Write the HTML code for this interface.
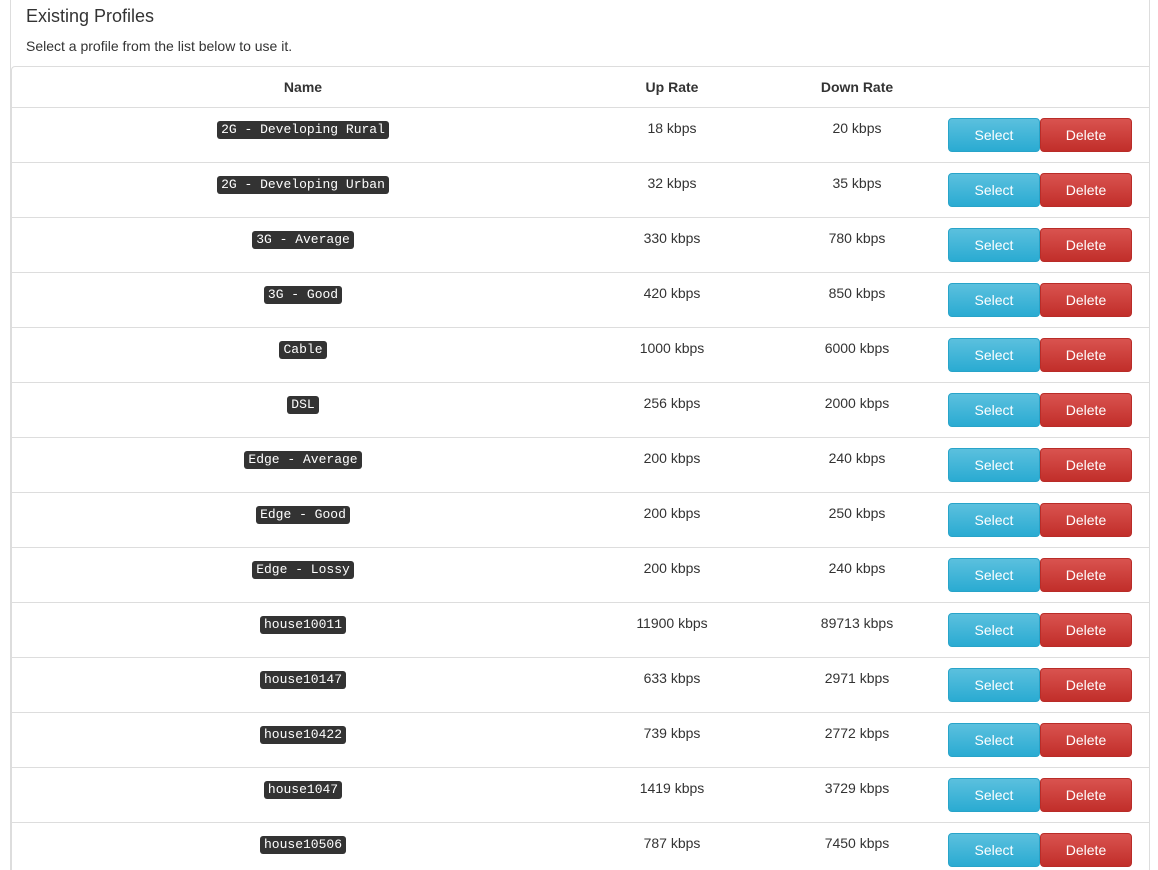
<!DOCTYPE html>
<html style="width:1158px;height:870px;overflow:hidden"><head><meta charset="utf-8"><style>
*{box-sizing:border-box;margin:0;padding:0}
body{width:1158px;height:870px;overflow:hidden;background:#fff;font-family:"Liberation Sans",sans-serif;color:#333;position:relative}
.panel{position:absolute;left:10px;top:-5px;width:1140px;height:900px;border:1px solid #ddd;border-top:none}
h3{position:absolute;left:26px;top:5px;font-size:18px;font-weight:normal;line-height:22px}
.sub{position:absolute;left:26px;top:37px;font-size:14px;line-height:18px}
.tbl{position:absolute;left:11px;top:66px;width:1138px;height:820px;border-top:1px solid #ddd;border-left:1px solid #ddd;border-radius:4px 0 0 0}
.hd{position:absolute;top:0;height:41px;width:100%;border-bottom:1px solid #ddd;font-weight:bold;font-size:14px}
.row{position:absolute;left:0;width:100%;height:55px;border-bottom:1px solid #ddd;font-size:14px}
.c{position:absolute;text-align:center;line-height:20px}
.n{left:0;width:582px}.u{left:584px;width:152px}.d{left:768px;width:154px}
.hd .c{top:10px}.row .c{top:10px}
code{font-family:"Liberation Mono",monospace;font-size:13px;background:#333;color:#fff;padding:1px 4px;border-radius:3px;line-height:16px;display:inline-block;margin-top:3px;vertical-align:top}
.b{position:absolute;top:10px;height:34px;width:92px;border-radius:4px;color:#fff;font-size:14px;text-align:center;line-height:32px}
.s{left:936px;background:linear-gradient(#5bc0de,#2aabd2);border:1px solid #28a4c9}
.x{left:1028px;background:linear-gradient(#d9534f,#c12e2a);border:1px solid #b92c28}
</style></head><body>
<div class="panel"></div>
<h3>Existing Profiles</h3>
<div class="sub">Select a profile from the list below to use it.</div>
<div class="tbl">
<div class="hd"><div class="c n">Name</div><div class="c u">Up Rate</div><div class="c d">Down Rate</div></div>
<div class="row" style="top:41px"><div class="c n"><code>2G - Developing Rural</code></div><div class="c u">18 kbps</div><div class="c d">20 kbps</div><div class="b s">Select</div><div class="b x">Delete</div></div>
<div class="row" style="top:96px"><div class="c n"><code>2G - Developing Urban</code></div><div class="c u">32 kbps</div><div class="c d">35 kbps</div><div class="b s">Select</div><div class="b x">Delete</div></div>
<div class="row" style="top:151px"><div class="c n"><code>3G - Average</code></div><div class="c u">330 kbps</div><div class="c d">780 kbps</div><div class="b s">Select</div><div class="b x">Delete</div></div>
<div class="row" style="top:206px"><div class="c n"><code>3G - Good</code></div><div class="c u">420 kbps</div><div class="c d">850 kbps</div><div class="b s">Select</div><div class="b x">Delete</div></div>
<div class="row" style="top:261px"><div class="c n"><code>Cable</code></div><div class="c u">1000 kbps</div><div class="c d">6000 kbps</div><div class="b s">Select</div><div class="b x">Delete</div></div>
<div class="row" style="top:316px"><div class="c n"><code>DSL</code></div><div class="c u">256 kbps</div><div class="c d">2000 kbps</div><div class="b s">Select</div><div class="b x">Delete</div></div>
<div class="row" style="top:371px"><div class="c n"><code>Edge - Average</code></div><div class="c u">200 kbps</div><div class="c d">240 kbps</div><div class="b s">Select</div><div class="b x">Delete</div></div>
<div class="row" style="top:426px"><div class="c n"><code>Edge - Good</code></div><div class="c u">200 kbps</div><div class="c d">250 kbps</div><div class="b s">Select</div><div class="b x">Delete</div></div>
<div class="row" style="top:481px"><div class="c n"><code>Edge - Lossy</code></div><div class="c u">200 kbps</div><div class="c d">240 kbps</div><div class="b s">Select</div><div class="b x">Delete</div></div>
<div class="row" style="top:536px"><div class="c n"><code>house10011</code></div><div class="c u">11900 kbps</div><div class="c d">89713 kbps</div><div class="b s">Select</div><div class="b x">Delete</div></div>
<div class="row" style="top:591px"><div class="c n"><code>house10147</code></div><div class="c u">633 kbps</div><div class="c d">2971 kbps</div><div class="b s">Select</div><div class="b x">Delete</div></div>
<div class="row" style="top:646px"><div class="c n"><code>house10422</code></div><div class="c u">739 kbps</div><div class="c d">2772 kbps</div><div class="b s">Select</div><div class="b x">Delete</div></div>
<div class="row" style="top:701px"><div class="c n"><code>house1047</code></div><div class="c u">1419 kbps</div><div class="c d">3729 kbps</div><div class="b s">Select</div><div class="b x">Delete</div></div>
<div class="row" style="top:756px"><div class="c n"><code>house10506</code></div><div class="c u">787 kbps</div><div class="c d">7450 kbps</div><div class="b s">Select</div><div class="b x">Delete</div></div>
</div>
</body></html>
